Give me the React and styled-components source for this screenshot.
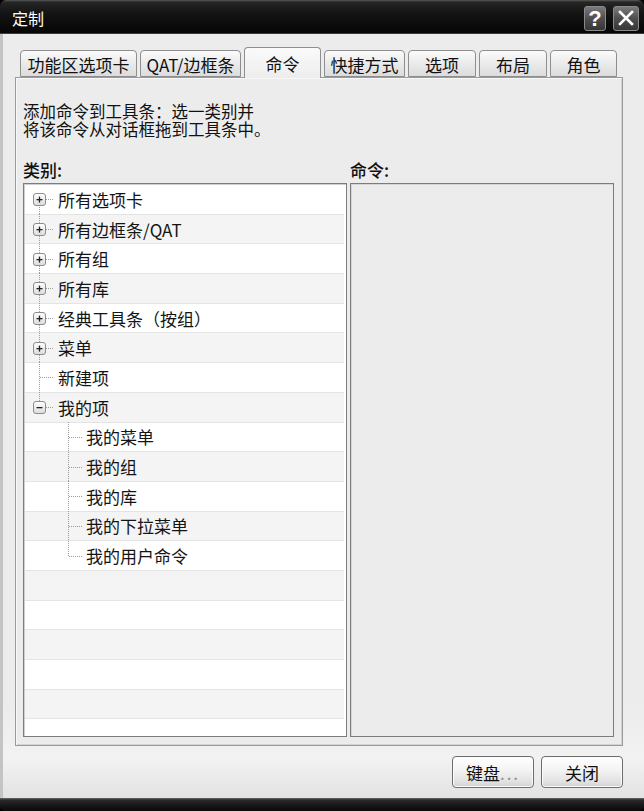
import React from "react";
import styled, { createGlobalStyle } from "styled-components";

const GlobalStyle = createGlobalStyle`
  html, body {
    margin: 0;
    padding: 0;
    background: #ffffff;
  }
  body {
    font-family: "Noto Sans CJK SC", "Liberation Sans", sans-serif;
    color: #111;
  }
`;

const tabs = [
  { label: "功能区选项卡", w: 117 },
  { label: "QAT/边框条", w: 101 },
  { label: "命令", w: 77, active: true },
  { label: "快捷方式", w: 81 },
  { label: "选项", w: 68 },
  { label: "布局", w: 68 },
  { label: "角色", w: 67 },
];

const tree = [
  { label: "所有选项卡", box: "+", first: true },
  { label: "所有边框条/QAT", box: "+" },
  { label: "所有组", box: "+" },
  { label: "所有库", box: "+" },
  { label: "经典工具条（按组）", box: "+" },
  { label: "菜单", box: "+" },
  { label: "新建项" },
  { label: "我的项", box: "-", last: true },
  { label: "我的菜单", level: 1 },
  { label: "我的组", level: 1 },
  { label: "我的库", level: 1 },
  { label: "我的下拉菜单", level: 1 },
  { label: "我的用户命令", level: 1, last: true },
];

const TOTAL_ROWS = 19;

const Guide = ({ level = 0, box, first, last }) => {
  const dot = { stroke: "#9c9c9c", strokeWidth: 1, strokeDasharray: "1 1" };
  if (level === 1) {
    return (
      <GuideSvg width="61" height="30">
        <line x1="43.5" y1="0" x2="43.5" y2={last ? 15 : 30} style={dot} />
        <line x1="44" y1="15.5" x2="57" y2="15.5" style={dot} />
      </GuideSvg>
    );
  }
  return (
    <GuideSvg width="33" height="30">
      <defs>
        <linearGradient id="boxfill" x1="0" y1="0" x2="0" y2="1">
          <stop offset="0" stopColor="#ffffff" />
          <stop offset="1" stopColor="#dcdcdc" />
        </linearGradient>
      </defs>
      <line x1="14.5" y1={first ? 15 : 0} x2="14.5" y2={last ? 15 : 30} style={dot} />
      <line x1={box ? 21 : 15} y1="15.5" x2="29" y2="15.5" style={dot} />
      {box && (
        <>
          <rect x="8.5" y="9.5" width="12" height="12" rx="2.5" fill="url(#boxfill)" stroke="#8c8c8c" />
          <rect x="11.5" y="15" width="6" height="1.3" fill="#222" />
          {box === "+" && <rect x="13.85" y="12.6" width="1.3" height="6" fill="#222" />}
        </>
      )}
    </GuideSvg>
  );
};

export default function App() {
  const rows = Array.from({ length: TOTAL_ROWS }, (_, i) => tree[i] || null);
  return (
    <>
      <GlobalStyle />
      <Window>
        <TitleBar>
          <Title>定制</Title>
          <CaptionButtons>
            <CapButton $w={22}>?</CapButton>
            <CapButton $w={26}>
              <svg width="18" height="18" viewBox="0 0 18 18">
                <path d="M3 3 L15 15 M15 3 L3 15" stroke="#fff" strokeWidth="2.6" strokeLinecap="square" />
              </svg>
            </CapButton>
          </CaptionButtons>
        </TitleBar>

        <Body>
          <TabStrip>
            {tabs.map((t) => (
              <Tab key={t.label} $w={t.w} $active={t.active}>
                {t.label}
              </Tab>
            ))}
          </TabStrip>

          <Panel>
            <Instructions>
              <Line>添加命令到工具条：选一类别并</Line>
              <Line>将该命令从对话框拖到工具条中。</Line>
            </Instructions>

            <Columns>
              <Column>
                <Label>类别:</Label>
                <ListBox>
                  {rows.map((r, i) => (
                    <Row key={i} $alt={i % 2 === 1}>
                      {r && (
                        <>
                          <Guide level={r.level} box={r.box} first={r.first} last={r.last} />
                          <RowText>{r.label}</RowText>
                        </>
                      )}
                    </Row>
                  ))}
                </ListBox>
              </Column>
              <Column>
                <Label>命令:</Label>
                <CommandBox />
              </Column>
            </Columns>
          </Panel>

          <Footer>
            <Button>
              键盘<Dots>...</Dots>
            </Button>
            <Button>关闭</Button>
          </Footer>
        </Body>

        <BottomBar />
      </Window>
    </>
  );
}

const Window = styled.div`
  width: 644px;
  height: 811px;
  display: flex;
  flex-direction: column;
  overflow: hidden;
  background: #000;
`;

const TitleBar = styled.div`
  height: 34px;
  flex: 0 0 34px;
  box-sizing: border-box;
  display: flex;
  align-items: center;
  justify-content: space-between;
  padding: 0 5px 0 12px;
  border-radius: 6px 6px 0 0;
  background: linear-gradient(#5a5a5a 0, #262626 2px, #141414 40%, #050505 100%);
  border-bottom: 1px solid #3c3c3c;
`;

const Title = styled.span`
  color: #fff;
  font-size: 16px;
  line-height: 1;
  padding-top: 2px;
`;

const CaptionButtons = styled.div`
  display: flex;
  gap: 7px;
  padding-top: 3px;
`;

const CapButton = styled.div`
  width: ${(p) => p.$w}px;
  height: 25px;
  box-sizing: border-box;
  border: 1px solid #8a8a8a;
  border-radius: 3px;
  background: linear-gradient(#7a7a7a, #4e4e4e 50%, #363636);
  color: #fff;
  font-family: "Liberation Sans", sans-serif;
  font-size: 22px;
  font-weight: 700;
  line-height: 23px;
  text-align: center;
  display: flex;
  align-items: center;
  justify-content: center;
`;

const Body = styled.div`
  flex: 1;
  display: flex;
  flex-direction: column;
  box-sizing: border-box;
  padding: 13px 21px 0 12px;
  border-left: 3px solid #c4c4c4;
  background: linear-gradient(#ececec 0, #ececec 88%, #f2f2f2 95%, #e2e2e2 100%);
`;

const TabStrip = styled.div`
  height: 30px;
  display: flex;
  align-items: flex-end;
  gap: 3px;
  padding-left: 5px;
  position: relative;
  z-index: 1;
`;

const Tab = styled.div`
  width: ${(p) => p.$w}px;
  height: ${(p) => (p.$active ? 31 : 27)}px;
  margin-bottom: ${(p) => (p.$active ? -1 : 0)}px;
  box-sizing: border-box;
  border: 1px solid #8e8e8e;
  border-bottom: ${(p) => (p.$active ? "none" : "1px solid #8e8e8e")};
  border-radius: 4px 4px 0 0;
  background: ${(p) =>
    p.$active
      ? "linear-gradient(#fafafa, #ededed)"
      : "linear-gradient(#fbfbfb 0, #ececec 45%, #dcdcdc 100%)"};
  display: flex;
  align-items: center;
  justify-content: center;
  font-size: 17px;
  line-height: 1;
  color: #111;
  padding-top: ${(p) => (p.$active ? 0 : 1)}px;
  white-space: nowrap;
`;

const Panel = styled.div`
  height: 669px;
  flex: 0 0 669px;
  box-sizing: border-box;
  border: 1px solid #9a9a9a;
  box-shadow: inset 1px 1px 0 #f8f8f8, inset -1px -1px 0 #d2d2d2;
  background: #ececec;
  padding: 0 8px 0 7px;
  display: flex;
  flex-direction: column;
`;

const Instructions = styled.div`
  margin-top: 24px;
  display: flex;
  flex-direction: column;
`;

const Line = styled.div`
  font-size: 16.5px;
  line-height: 18px;
  color: #111;
  white-space: nowrap;
`;

const Columns = styled.div`
  margin-top: 23px;
  display: grid;
  grid-template-columns: 324px 264px;
  column-gap: 3px;
`;

const Column = styled.div`
  display: flex;
  flex-direction: column;
`;

const Label = styled.div`
  font-size: 17px;
  line-height: 18px;
  height: 18px;
  font-weight: 500;
  margin-bottom: 4px;
`;

const ListBox = styled.div`
  height: 554px;
  box-sizing: border-box;
  border: 1px solid #7c7c7c;
  box-shadow: inset 1px 1px 0 #cfcfcf;
  background: #fff;
  padding: 1px 2px 0 1px;
  overflow: hidden;
`;

const Row = styled.div`
  height: 29.7px;
  box-sizing: border-box;
  display: flex;
  align-items: center;
  background: ${(p) => (p.$alt ? "#f4f4f4" : "#ffffff")};
  border-bottom: 1px solid #e4e4e4;
`;

const GuideSvg = styled.svg`
  flex: 0 0 auto;
  display: block;
`;

const RowText = styled.span`
  font-size: 17px;
  line-height: 1;
  color: #141414;
  white-space: nowrap;
`;

const CommandBox = styled.div`
  height: 554px;
  box-sizing: border-box;
  border: 1px solid #7c7c7c;
  box-shadow: inset 1px 1px 0 #d6d6d6;
  background: #ececec;
`;

const Footer = styled.div`
  flex: 1;
  display: flex;
  justify-content: flex-end;
  align-items: flex-start;
  gap: 7px;
  padding-top: 10px;
`;

const Button = styled.div`
  width: 82px;
  height: 32px;
  box-sizing: border-box;
  border: 1px solid #6e6e6e;
  border-radius: 4px;
  background: linear-gradient(#ffffff 0, #f3f3f3 45%, #e0e0e0 85%, #cfcfcf 100%);
  box-shadow: inset 0 0 0 1px #fafafa;
  display: flex;
  align-items: center;
  justify-content: center;
  font-size: 17px;
  line-height: 1;
  color: #111;
`;

const Dots = styled.span`
  color: #8a8a8a;
  letter-spacing: 2px;
`;

const BottomBar = styled.div`
  height: 13px;
  flex: 0 0 13px;
  border-radius: 0 0 5px 5px;
  background: linear-gradient(#6a6a6a 0, #2a2a2a 2px, #161616 60%, #0a0a0a 100%);
`;
